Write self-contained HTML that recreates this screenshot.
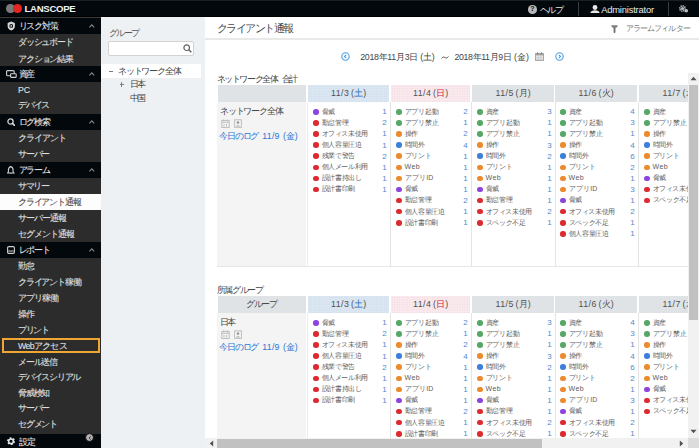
<!DOCTYPE html><html><head><meta charset="utf-8"><style>*{margin:0;padding:0;box-sizing:border-box}
html,body{width:699px;height:448px;overflow:hidden;background:#fff}
body{position:relative;font-family:"Liberation Sans",sans-serif;color:#444}
.abs{position:absolute}
.t{position:absolute;white-space:nowrap}
.sb{-webkit-text-stroke:0.08px currentColor}
.chev{position:absolute;width:3.6px;height:3.6px;border-left:1px solid #8c8c8c;border-top:1px solid #8c8c8c;transform:rotate(45deg)}
.hd{position:absolute;height:17px;background:#dfe3e6}
.hb{background-color:#dae6f2;background-image:radial-gradient(#c9d6e6 0.5px,transparent 0.6px);background-size:2.5px 2.5px}
.hp{background-color:#fae9ec;background-image:radial-gradient(#e9d3e2 0.5px,transparent 0.6px);background-size:2.5px 2.5px}
.dot{position:absolute;width:5.6px;height:5.6px;border-radius:50%}
.vl{position:absolute;width:1px;background:#e4e4e4}
</style></head><body>
<div class="abs" style="left:0;top:0;width:699px;height:17px;background:#03080d"></div>
<div class="abs" style="left:0;top:0;width:699px;height:1px;background:#182024"></div>
<div class="abs" style="left:0;top:15.5px;width:699px;height:1.5px;background:#000"></div>
<div class="abs" style="left:6px;top:4px;width:8.5px;height:9px;border-radius:50%;background:#7a7a7a"></div>
<div class="abs" style="left:12.5px;top:4px;width:9px;height:9px;border-radius:50%;background:#e52520"></div>
<div class="abs" style="left:12.5px;top:4px;width:9px;height:9px;border-radius:50%;background:#8a4a2a;clip-path:circle(4.25px at -2.25px 4.5px)"></div>
<div class="t " style="left:24.5px;top:2.7px;font-size:9.6px;line-height:11px;color:#f2f2f2;letter-spacing:-0.30px;font-weight:bold">LANSCOPE</div>
<div class="abs" style="left:528px;top:5px;width:8.5px;height:8.5px;border-radius:50%;background:#b8b8b8"></div>
<div class="t" style="left:530.3px;top:4.3px;font-size:7px;line-height:9px;font-weight:bold;color:#03080d">?</div>
<div class="t " style="left:539.5px;top:4.5px;font-size:8.8px;line-height:11px;color:#e8e8e8;letter-spacing:-1.35px;">ヘルプ</div>
<div class="abs" style="left:577.5px;top:2px;width:1px;height:13.5px;background:#3a3d40"></div>
<svg class="abs" style="left:590px;top:4.5px" width="10" height="8.5" viewBox="0 0 10 8.5"><circle cx="5" cy="2.5" r="2.4" fill="#e8e8e8"/><path d="M0.3 8.5 Q0.6 5.3 5 5.3 Q9.4 5.3 9.7 8.5Z" fill="#e8e8e8"/></svg>
<div class="t " style="left:601.2px;top:4px;font-size:9.4px;line-height:11px;color:#e8e8e8;letter-spacing:-0.20px;">Administrator</div>
<div class="abs" style="left:667.5px;top:2px;width:1px;height:13.5px;background:#3a3d40"></div>
<svg class="abs" style="left:679px;top:5px" width="10" height="8" viewBox="0 0 10 8"><circle cx="3.5" cy="3.5" r="2.6" fill="none" stroke="#bdbdbd" stroke-width="1.8" stroke-dasharray="1.2 0.8"/><circle cx="3.5" cy="3.5" r="1.6" fill="#bdbdbd"/><circle cx="7.3" cy="5.8" r="1.8" fill="#bdbdbd"/></svg>
<div class="abs" style="left:0;top:17px;width:101px;height:431px;background:#2c2c2c"></div>
<div class="abs" style="left:0;top:17px;width:101px;height:1px;background:#3a3a3a"></div>
<div class="abs" style="left:0;top:18px;width:101px;height:16px;background:#03080d"></div>
<i class="chev" style="left:90.4px;top:24.6px"></i>
<div class="t sb" style="left:18.5px;top:20.5px;font-size:8.8px;line-height:11px;color:#e4e4e4;letter-spacing:-1.18px;">リスク対策</div>
<div class="t sb" style="left:18px;top:36.5px;font-size:8.8px;line-height:11px;color:#e2e2e2;letter-spacing:-1.20px;">ダッシュボード</div>
<div class="t sb" style="left:18px;top:53.5px;font-size:8.8px;line-height:11px;color:#e2e2e2;letter-spacing:-1.13px;">アクション結果</div>
<div class="abs" style="left:0;top:66px;width:101px;height:16px;background:#03080d"></div>
<i class="chev" style="left:90.4px;top:72.6px"></i>
<div class="t sb" style="left:18.5px;top:69.0px;font-size:8.8px;line-height:11px;color:#e4e4e4;letter-spacing:-1.90px;">資産</div>
<div class="t sb" style="left:18px;top:84.5px;font-size:8.8px;line-height:11px;color:#e2e2e2;letter-spacing:0.00px;">PC</div>
<div class="t sb" style="left:18px;top:100.0px;font-size:8.8px;line-height:11px;color:#e2e2e2;letter-spacing:-1.17px;">デバイス</div>
<div class="abs" style="left:0;top:114px;width:101px;height:16px;background:#03080d"></div>
<i class="chev" style="left:90.4px;top:120.6px"></i>
<div class="t sb" style="left:18.5px;top:116.5px;font-size:8.8px;line-height:11px;color:#e4e4e4;letter-spacing:-1.07px;">ログ検索</div>
<div class="t sb" style="left:18px;top:132.5px;font-size:8.8px;line-height:11px;color:#e2e2e2;letter-spacing:-1.10px;">クライアント</div>
<div class="t sb" style="left:18px;top:148.5px;font-size:8.8px;line-height:11px;color:#e2e2e2;letter-spacing:-1.20px;">サーバー</div>
<div class="abs" style="left:0;top:162px;width:101px;height:16px;background:#03080d"></div>
<i class="chev" style="left:90.4px;top:168.6px"></i>
<div class="t sb" style="left:18.5px;top:164.5px;font-size:8.8px;line-height:11px;color:#e4e4e4;letter-spacing:-1.20px;">アラーム</div>
<div class="t sb" style="left:18px;top:180.5px;font-size:8.8px;line-height:11px;color:#e2e2e2;letter-spacing:-1.47px;">サマリー</div>
<div class="abs" style="left:0;top:194px;width:101px;height:15.5px;background:#fdfdfd"></div>
<div class="t sb" style="left:18px;top:196.5px;font-size:8.8px;line-height:11px;color:#4a4a4a;letter-spacing:-1.17px;">クライアント通報</div>
<div class="t sb" style="left:18px;top:212.5px;font-size:8.8px;line-height:11px;color:#e2e2e2;letter-spacing:-1.10px;">サーバー通報</div>
<div class="t sb" style="left:18px;top:228.5px;font-size:8.8px;line-height:11px;color:#e2e2e2;letter-spacing:-1.07px;">セグメント通報</div>
<div class="abs" style="left:0;top:242px;width:101px;height:16px;background:#03080d"></div>
<i class="chev" style="left:90.4px;top:248.6px"></i>
<div class="t sb" style="left:18.5px;top:244.5px;font-size:8.8px;line-height:11px;color:#e4e4e4;letter-spacing:-1.30px;">レポート</div>
<div class="t sb" style="left:18px;top:260.5px;font-size:8.8px;line-height:11px;color:#e2e2e2;letter-spacing:-1.40px;">勤怠</div>
<div class="t sb" style="left:18px;top:276.5px;font-size:8.8px;line-height:11px;color:#e2e2e2;letter-spacing:-1.21px;">クライアント稼働</div>
<div class="t sb" style="left:18px;top:292.5px;font-size:8.8px;line-height:11px;color:#e2e2e2;letter-spacing:-1.12px;">アプリ稼働</div>
<div class="t sb" style="left:18px;top:308.5px;font-size:8.8px;line-height:11px;color:#e2e2e2;letter-spacing:-1.40px;">操作</div>
<div class="t sb" style="left:18px;top:324.5px;font-size:8.8px;line-height:11px;color:#e2e2e2;letter-spacing:-1.27px;">プリント</div>
<div class="t sb" style="left:18px;top:340.5px;font-size:8.8px;line-height:11px;color:#e2e2e2;letter-spacing:-0.69px;">Webアクセス</div>
<div class="abs" style="left:2px;top:337.5px;width:98px;height:15px;border:2px solid #f0a632"></div>
<div class="t sb" style="left:18px;top:356.5px;font-size:8.8px;line-height:11px;color:#e2e2e2;letter-spacing:-1.18px;">メール送信</div>
<div class="t sb" style="left:18px;top:371.5px;font-size:8.8px;line-height:11px;color:#e2e2e2;letter-spacing:-1.24px;">デバイスシリアル</div>
<div class="t sb" style="left:18px;top:387.7px;font-size:8.8px;line-height:11px;color:#e2e2e2;letter-spacing:-1.23px;">脅威検知</div>
<div class="t sb" style="left:18px;top:403.0px;font-size:8.8px;line-height:11px;color:#e2e2e2;letter-spacing:-1.23px;">サーバー</div>
<div class="t sb" style="left:18px;top:419.0px;font-size:8.8px;line-height:11px;color:#e2e2e2;letter-spacing:-1.18px;">セグメント</div>
<div class="abs" style="left:0;top:434px;width:101px;height:14px;background:#03080d"></div>
<div class="t sb" style="left:18.5px;top:436.5px;font-size:8.8px;line-height:11px;color:#e4e4e4;letter-spacing:-0.70px;">設定</div>
<svg class="abs" style="left:6.5px;top:21px" width="8.5" height="10" viewBox="0 0 8.5 10"><path d="M4.25 0.5 L7.9 1.9 V5 Q7.9 8 4.25 9.6 Q0.6 8 0.6 5 V1.9Z" fill="#d5d5d5"/><circle cx="4.25" cy="4.9" r="1.9" fill="#03080d"/><circle cx="4.25" cy="4.9" r="0.9" fill="#d5d5d5"/></svg>
<svg class="abs" style="left:5.5px;top:69.8px" width="11" height="8" viewBox="0 0 11 8"><rect x="0.6" y="0.6" width="7.6" height="5.2" rx="1" fill="none" stroke="#d0d0d0" stroke-width="1.1"/><rect x="4.6" y="3.8" width="5.6" height="3.6" rx="0.6" fill="#03080d" stroke="#d0d0d0" stroke-width="1.1"/></svg>
<svg class="abs" style="left:6.5px;top:117.8px" width="8.5" height="8.5" viewBox="0 0 8.5 8.5"><circle cx="3.5" cy="3.5" r="2.6" fill="none" stroke="#d5d5d5" stroke-width="1.3"/><path d="M5.4 5.4 L8 8" stroke="#d5d5d5" stroke-width="1.6"/></svg>
<svg class="abs" style="left:7px;top:165.5px" width="7.5" height="8.5" viewBox="0 0 7.5 8.5"><path d="M3.75 0.6 Q6.1 1.3 6.1 4.2 V6 L7 7 H0.5 L1.4 6 V4.2 Q1.4 1.3 3.75 0.6Z" fill="none" stroke="#d0d0d0" stroke-width="1.1"/><path d="M2.9 8 H4.6" stroke="#d0d0d0" stroke-width="1"/></svg>
<svg class="abs" style="left:6.8px;top:245.8px" width="8" height="8" viewBox="0 0 8 8"><rect x="0.6" y="0.6" width="6.8" height="6.8" rx="1.2" fill="none" stroke="#cfcfcf" stroke-width="1.1"/><path d="M1.2 5 H6.8" stroke="#cfcfcf" stroke-width="1"/></svg>
<svg class="abs" style="left:6.8px;top:436.8px" width="8" height="8.5" viewBox="0 0 8 8.5"><circle cx="4" cy="4.25" r="3.2" fill="none" stroke="#e6e6e6" stroke-width="1.6" stroke-dasharray="1.75 1.6"/><circle cx="4" cy="4.25" r="2.35" fill="none" stroke="#e6e6e6" stroke-width="1.5"/></svg>
<div class="abs" style="left:85px;top:433.2px;width:9px;height:9px;border-radius:50%;background:#b0b0b0;border:1px solid #050608"></div>
<svg class="abs" style="left:88px;top:436px" width="4" height="4" viewBox="0 0 4 4"><path d="M2.8 0.5 L1 2 L2.8 3.5" fill="none" stroke="#333" stroke-width="0.9"/></svg>
<div class="abs" style="left:101px;top:17px;width:104px;height:431px;background:#eef1f3"></div>
<div class="t " style="left:108.8px;top:28px;font-size:8.8px;line-height:11px;color:#555;letter-spacing:-1.47px;">グループ</div>
<div class="abs" style="left:108px;top:41px;width:86px;height:15px;background:#fff;border:1px solid #d2d2d2;border-radius:2px"></div>
<svg class="abs" style="left:183px;top:44px" width="9" height="9" viewBox="0 0 9 9"><circle cx="3.7" cy="3.7" r="2.8" fill="none" stroke="#606060" stroke-width="1.2"/><path d="M5.7 5.7 L8.3 8.3" stroke="#606060" stroke-width="1.4"/></svg>
<div class="abs" style="left:101px;top:64px;width:100px;height:14px;background:#fff"></div>
<div class="abs" style="left:108.5px;top:70.5px;width:4.5px;height:1px;background:#777"></div>
<div class="t " style="left:118px;top:65.5px;font-size:8.8px;line-height:11px;color:#444;letter-spacing:-1.17px;">ネットワーク全体</div>
<div class="abs" style="left:119.5px;top:84px;width:4.5px;height:1px;background:#808080"></div><div class="abs" style="left:121.25px;top:82.25px;width:1px;height:4.5px;background:#808080"></div>
<div class="t " style="left:129.6px;top:79px;font-size:8.8px;line-height:11px;color:#444;letter-spacing:-1.70px;">日本</div>
<div class="t " style="left:129.6px;top:93px;font-size:8.8px;line-height:11px;color:#444;letter-spacing:-1.70px;">中国</div>
<div class="t " style="left:217px;top:21.5px;font-size:10.8px;line-height:13px;color:#4a4a4a;letter-spacing:-1.51px;">クライアント通報</div>
<svg class="abs" style="left:611px;top:24.8px" width="7" height="8" viewBox="0 0 7 8"><path d="M0.6 0.8 H6.4 L4 3.6 V7.6 H3 V3.6Z" fill="#8a8a8a" stroke="#666" stroke-width="0.8" stroke-linejoin="round"/></svg>
<div class="t " style="left:625.5px;top:23px;font-size:8px;line-height:11px;color:#777;letter-spacing:-0.84px;">アラームフィルター</div>
<div class="abs" style="left:205px;top:38px;width:494px;height:2px;background:#e9e9e9"></div>
<svg class="abs" style="left:341px;top:52px" width="9" height="9" viewBox="0 0 9 9"><circle cx="4.5" cy="4.5" r="3.7" fill="none" stroke="#4a9ee0" stroke-width="1.1"/><path d="M5.2 2.8 L3.5 4.5 L5.2 6.2" fill="none" stroke="#4a9ee0" stroke-width="1.1"/></svg>
<div class="t " style="left:360.2px;top:51.5px;font-size:8.8px;line-height:11px;color:#444;letter-spacing:-0.28px;">2018年11月3日</div>
<div class="t " style="left:420.3px;top:51.5px;font-size:8.8px;line-height:11px;color:#444;letter-spacing:-0.23px;">(土)</div>
<svg class="abs" style="left:440.8px;top:54.5px" width="8" height="5" viewBox="0 0 8 5"><path d="M0.5 3.6 Q2.2 0.6 4 2.5 Q5.8 4.4 7.5 1.4" fill="none" stroke="#555" stroke-width="0.9"/></svg>
<div class="t " style="left:454.5px;top:51.5px;font-size:8.8px;line-height:11px;color:#444;letter-spacing:-0.37px;">2018年11月9日</div>
<div class="t " style="left:513.9px;top:51.5px;font-size:8.8px;line-height:11px;color:#444;letter-spacing:0.12px;">(金)</div>
<svg class="abs" style="left:535.3px;top:52px" width="9" height="9" viewBox="0 0 9 9"><rect x="0.6" y="1.6" width="7.8" height="6.8" fill="#f0f0f0" stroke="#a0a0a0" stroke-width="1"/><rect x="0.6" y="1.6" width="7.8" height="1.8" fill="#a0a0a0"/><path d="M1.2 5.3 H7.8 M1.2 7 H7.8 M3.3 3.4 V8 M5.6 3.4 V8" stroke="#c4c4c4" stroke-width="0.7"/><path d="M2.5 0.2 V2.4 M6.5 0.2 V2.4" stroke="#888" stroke-width="1.1"/></svg>
<svg class="abs" style="left:555px;top:51.8px" width="9" height="9" viewBox="0 0 9 9"><circle cx="4.5" cy="4.5" r="3.7" fill="none" stroke="#4a9ee0" stroke-width="1.1"/><path d="M3.8 2.8 L5.5 4.5 L3.8 6.2" fill="none" stroke="#4a9ee0" stroke-width="1.1"/></svg>
<div class="abs" style="left:205px;top:73px;width:483px;height:365px;overflow:hidden">
<div class="t " style="left:11.5px;top:0.5px;font-size:8.8px;line-height:11px;color:#444;letter-spacing:-1.39px;">ネットワーク全体</div>
<div class="t " style="left:76.60000000000002px;top:0.5px;font-size:8.8px;line-height:11px;color:#444;letter-spacing:-1.80px;">合計</div>
<div class="hd" style="left:13px;top:12px;width:88px"></div>
<div class="abs" style="left:12px;top:29px;width:89px;height:164px;background:#f4f4f4"></div>
<div class="vl" style="left:102px;top:29px;height:164px;background:#ececec"></div>
<div class="t " style="left:15px;top:32.5px;font-size:8.8px;line-height:11px;color:#444;letter-spacing:-1.17px;">ネットワーク全体</div>
<svg class="abs" style="left:15.5px;top:45.5px" width="9" height="9" viewBox="0 0 9 9"><rect x="0.8" y="1.5" width="7.4" height="7" fill="none" stroke="#bfbfbf" stroke-width="1"/><path d="M0.8 3.3 H8.2 M2.6 0.3 V2.3 M6.4 0.3 V2.3 M3 5 V7.5 M5.5 5 V7.5" stroke="#bfbfbf" stroke-width="1"/></svg>
<svg class="abs" style="left:29px;top:45.5px" width="8" height="9" viewBox="0 0 8 9"><rect x="0.6" y="0.8" width="6.8" height="7.6" fill="none" stroke="#bfbfbf" stroke-width="1"/><circle cx="4" cy="3.6" r="1.3" fill="#999"/><path d="M1.8 7.6 Q4 4.5 6.2 7.6" fill="#b5b5b5"/></svg>
<div class="t " style="left:14.400000000000006px;top:58px;font-size:8.8px;line-height:11px;color:#2b74d2;letter-spacing:-1.23px;">今日のログ</div>
<div class="t " style="left:57.30000000000001px;top:58px;font-size:8.8px;line-height:11px;color:#2b74d2;letter-spacing:0.24px;">11/9</div>
<div class="t " style="left:78px;top:58px;font-size:8.8px;line-height:11px;color:#2b74d2;letter-spacing:-0.03px;">(金)</div>
<div class="hd hb" style="left:103px;top:12px;width:81px"></div>
<div class="t " style="left:126.0px;top:14px;font-size:8.8px;line-height:13px;color:#505050;letter-spacing:0.44px;">11/3</div>
<div class="t " style="left:146.0px;top:14px;font-size:8.8px;line-height:13px;color:#505050;letter-spacing:0.21px;">(<span style="color:#2a6cc0">土</span>)</div>
<div class="vl" style="left:185px;top:29px;height:164px"></div>
<div class="dot" style="left:108.2px;top:36.0px;background:#8d44df"></div>
<div class="t " style="left:116.6px;top:34.6px;font-size:7px;line-height:8px;color:#5c5c5c;letter-spacing:-0.20px;">脅威</div>
<div class="t" style="left:159.8px;top:34.2px;width:22px;text-align:right;font-size:8px;line-height:9px;color:#5089d2">1</div>
<div class="dot" style="left:108.2px;top:47.1px;background:#dd2a30"></div>
<div class="t " style="left:116.6px;top:45.7px;font-size:7px;line-height:8px;color:#5c5c5c;letter-spacing:-0.23px;">勤怠管理</div>
<div class="t" style="left:159.8px;top:45.3px;width:22px;text-align:right;font-size:8px;line-height:9px;color:#5089d2">2</div>
<div class="dot" style="left:108.2px;top:58.2px;background:#dd2a30"></div>
<div class="t " style="left:116.6px;top:56.8px;font-size:7px;line-height:8px;color:#5c5c5c;letter-spacing:-0.37px;">オフィス未使用</div>
<div class="t" style="left:159.8px;top:56.4px;width:22px;text-align:right;font-size:8px;line-height:9px;color:#5089d2">1</div>
<div class="dot" style="left:108.2px;top:69.3px;background:#dd2a30"></div>
<div class="t " style="left:116.6px;top:67.9px;font-size:7px;line-height:8px;color:#5c5c5c;letter-spacing:-0.34px;">個人容量圧迫</div>
<div class="t" style="left:159.8px;top:67.5px;width:22px;text-align:right;font-size:8px;line-height:9px;color:#5089d2">1</div>
<div class="dot" style="left:108.2px;top:80.4px;background:#dd2a30"></div>
<div class="t " style="left:116.6px;top:79.0px;font-size:7px;line-height:8px;color:#5c5c5c;letter-spacing:-0.30px;">残業で警告</div>
<div class="t" style="left:159.8px;top:78.6px;width:22px;text-align:right;font-size:8px;line-height:9px;color:#5089d2">2</div>
<div class="dot" style="left:108.2px;top:91.5px;background:#dd2a30"></div>
<div class="t " style="left:116.6px;top:90.1px;font-size:7px;line-height:8px;color:#5c5c5c;letter-spacing:-0.37px;">個人メール利用</div>
<div class="t" style="left:159.8px;top:89.7px;width:22px;text-align:right;font-size:8px;line-height:9px;color:#5089d2">1</div>
<div class="dot" style="left:108.2px;top:102.6px;background:#dd2a30"></div>
<div class="t " style="left:116.6px;top:101.2px;font-size:7px;line-height:8px;color:#5c5c5c;letter-spacing:-0.34px;">設計書持出し</div>
<div class="t" style="left:159.8px;top:100.8px;width:22px;text-align:right;font-size:8px;line-height:9px;color:#5089d2">1</div>
<div class="dot" style="left:108.2px;top:113.7px;background:#dd2a30"></div>
<div class="t " style="left:116.6px;top:112.3px;font-size:7px;line-height:8px;color:#5c5c5c;letter-spacing:-0.30px;">設計書印刷</div>
<div class="t" style="left:159.8px;top:111.9px;width:22px;text-align:right;font-size:8px;line-height:9px;color:#5089d2">1</div>
<div class="hd hp" style="left:186px;top:12px;width:79px"></div>
<div class="t " style="left:208.0px;top:14px;font-size:8.8px;line-height:13px;color:#505050;letter-spacing:0.44px;">11/4</div>
<div class="t " style="left:228.0px;top:14px;font-size:8.8px;line-height:13px;color:#505050;letter-spacing:0.21px;">(<span style="color:#d0283a">日</span>)</div>
<div class="vl" style="left:266px;top:29px;height:164px"></div>
<div class="dot" style="left:191.2px;top:36.0px;background:#56a866"></div>
<div class="t " style="left:199.6px;top:34.6px;font-size:7px;line-height:8px;color:#5c5c5c;letter-spacing:-0.10px;">アプリ起動</div>
<div class="t" style="left:240.8px;top:34.2px;width:22px;text-align:right;font-size:8px;line-height:9px;color:#5089d2">2</div>
<div class="dot" style="left:191.2px;top:47.1px;background:#56a866"></div>
<div class="t " style="left:199.6px;top:45.7px;font-size:7px;line-height:8px;color:#5c5c5c;letter-spacing:-0.10px;">アプリ禁止</div>
<div class="t" style="left:240.8px;top:45.3px;width:22px;text-align:right;font-size:8px;line-height:9px;color:#5089d2">1</div>
<div class="dot" style="left:191.2px;top:58.2px;background:#ec8a2e"></div>
<div class="t " style="left:199.6px;top:56.8px;font-size:7px;line-height:8px;color:#5c5c5c;letter-spacing:-0.20px;">操作</div>
<div class="t" style="left:240.8px;top:56.4px;width:22px;text-align:right;font-size:8px;line-height:9px;color:#5089d2">2</div>
<div class="dot" style="left:191.2px;top:69.3px;background:#3d7fdc"></div>
<div class="t " style="left:199.6px;top:67.9px;font-size:7px;line-height:8px;color:#5c5c5c;letter-spacing:-0.30px;">時間外</div>
<div class="t" style="left:240.8px;top:67.5px;width:22px;text-align:right;font-size:8px;line-height:9px;color:#5089d2">4</div>
<div class="dot" style="left:191.2px;top:80.4px;background:#ec8a2e"></div>
<div class="t " style="left:199.6px;top:79.0px;font-size:7px;line-height:8px;color:#5c5c5c;letter-spacing:-0.17px;">プリント</div>
<div class="t" style="left:240.8px;top:78.6px;width:22px;text-align:right;font-size:8px;line-height:9px;color:#5089d2">1</div>
<div class="dot" style="left:191.2px;top:91.5px;background:#ec8a2e"></div>
<div class="t " style="left:199.6px;top:90.1px;font-size:7px;line-height:8px;color:#5c5c5c;letter-spacing:0.41px;">Web</div>
<div class="t" style="left:240.8px;top:89.7px;width:22px;text-align:right;font-size:8px;line-height:9px;color:#5089d2">1</div>
<div class="dot" style="left:191.2px;top:102.6px;background:#ec8a2e"></div>
<div class="t " style="left:199.6px;top:101.2px;font-size:7px;line-height:8px;color:#5c5c5c;letter-spacing:0.20px;">アプリID</div>
<div class="t" style="left:240.8px;top:100.8px;width:22px;text-align:right;font-size:8px;line-height:9px;color:#5089d2">1</div>
<div class="dot" style="left:191.2px;top:113.7px;background:#8d44df"></div>
<div class="t " style="left:199.6px;top:112.3px;font-size:7px;line-height:8px;color:#5c5c5c;letter-spacing:-0.20px;">脅威</div>
<div class="t" style="left:240.8px;top:111.9px;width:22px;text-align:right;font-size:8px;line-height:9px;color:#5089d2">1</div>
<div class="dot" style="left:191.2px;top:124.8px;background:#dd2a30"></div>
<div class="t " style="left:199.6px;top:123.4px;font-size:7px;line-height:8px;color:#5c5c5c;letter-spacing:-0.23px;">勤怠管理</div>
<div class="t" style="left:240.8px;top:123.0px;width:22px;text-align:right;font-size:8px;line-height:9px;color:#5089d2">2</div>
<div class="dot" style="left:191.2px;top:135.9px;background:#dd2a30"></div>
<div class="t " style="left:199.6px;top:134.5px;font-size:7px;line-height:8px;color:#5c5c5c;letter-spacing:-0.34px;">個人容量圧迫</div>
<div class="t" style="left:240.8px;top:134.1px;width:22px;text-align:right;font-size:8px;line-height:9px;color:#5089d2">1</div>
<div class="dot" style="left:191.2px;top:147.0px;background:#dd2a30"></div>
<div class="t " style="left:199.6px;top:145.6px;font-size:7px;line-height:8px;color:#5c5c5c;letter-spacing:-0.30px;">設計書印刷</div>
<div class="t" style="left:240.8px;top:145.2px;width:22px;text-align:right;font-size:8px;line-height:9px;color:#5089d2">1</div>
<div class="hd " style="left:267px;top:12px;width:82px"></div>
<div class="t " style="left:290.5px;top:14px;font-size:8.8px;line-height:13px;color:#505050;letter-spacing:0.44px;">11/5</div>
<div class="t " style="left:310.5px;top:14px;font-size:8.8px;line-height:13px;color:#505050;letter-spacing:0.22px;">(月)</div>
<div class="vl" style="left:350px;top:29px;height:164px"></div>
<div class="dot" style="left:272.2px;top:36.0px;background:#56a866"></div>
<div class="t " style="left:280.6px;top:34.6px;font-size:7px;line-height:8px;color:#5c5c5c;letter-spacing:-0.20px;">資産</div>
<div class="t" style="left:324.8px;top:34.2px;width:22px;text-align:right;font-size:8px;line-height:9px;color:#5089d2">3</div>
<div class="dot" style="left:272.2px;top:47.1px;background:#56a866"></div>
<div class="t " style="left:280.6px;top:45.7px;font-size:7px;line-height:8px;color:#5c5c5c;letter-spacing:-0.10px;">アプリ起動</div>
<div class="t" style="left:324.8px;top:45.3px;width:22px;text-align:right;font-size:8px;line-height:9px;color:#5089d2">1</div>
<div class="dot" style="left:272.2px;top:58.2px;background:#56a866"></div>
<div class="t " style="left:280.6px;top:56.8px;font-size:7px;line-height:8px;color:#5c5c5c;letter-spacing:-0.10px;">アプリ禁止</div>
<div class="t" style="left:324.8px;top:56.4px;width:22px;text-align:right;font-size:8px;line-height:9px;color:#5089d2">1</div>
<div class="dot" style="left:272.2px;top:69.3px;background:#ec8a2e"></div>
<div class="t " style="left:280.6px;top:67.9px;font-size:7px;line-height:8px;color:#5c5c5c;letter-spacing:-0.20px;">操作</div>
<div class="t" style="left:324.8px;top:67.5px;width:22px;text-align:right;font-size:8px;line-height:9px;color:#5089d2">3</div>
<div class="dot" style="left:272.2px;top:80.4px;background:#3d7fdc"></div>
<div class="t " style="left:280.6px;top:79.0px;font-size:7px;line-height:8px;color:#5c5c5c;letter-spacing:-0.30px;">時間外</div>
<div class="t" style="left:324.8px;top:78.6px;width:22px;text-align:right;font-size:8px;line-height:9px;color:#5089d2">2</div>
<div class="dot" style="left:272.2px;top:91.5px;background:#ec8a2e"></div>
<div class="t " style="left:280.6px;top:90.1px;font-size:7px;line-height:8px;color:#5c5c5c;letter-spacing:-0.17px;">プリント</div>
<div class="t" style="left:324.8px;top:89.7px;width:22px;text-align:right;font-size:8px;line-height:9px;color:#5089d2">1</div>
<div class="dot" style="left:272.2px;top:102.6px;background:#ec8a2e"></div>
<div class="t " style="left:280.6px;top:101.2px;font-size:7px;line-height:8px;color:#5c5c5c;letter-spacing:0.41px;">Web</div>
<div class="t" style="left:324.8px;top:100.8px;width:22px;text-align:right;font-size:8px;line-height:9px;color:#5089d2">1</div>
<div class="dot" style="left:272.2px;top:113.7px;background:#8d44df"></div>
<div class="t " style="left:280.6px;top:112.3px;font-size:7px;line-height:8px;color:#5c5c5c;letter-spacing:-0.20px;">脅威</div>
<div class="t" style="left:324.8px;top:111.9px;width:22px;text-align:right;font-size:8px;line-height:9px;color:#5089d2">1</div>
<div class="dot" style="left:272.2px;top:124.8px;background:#dd2a30"></div>
<div class="t " style="left:280.6px;top:123.4px;font-size:7px;line-height:8px;color:#5c5c5c;letter-spacing:-0.23px;">勤怠管理</div>
<div class="t" style="left:324.8px;top:123.0px;width:22px;text-align:right;font-size:8px;line-height:9px;color:#5089d2">1</div>
<div class="dot" style="left:272.2px;top:135.9px;background:#dd2a30"></div>
<div class="t " style="left:280.6px;top:134.5px;font-size:7px;line-height:8px;color:#5c5c5c;letter-spacing:-0.37px;">オフィス未使用</div>
<div class="t" style="left:324.8px;top:134.1px;width:22px;text-align:right;font-size:8px;line-height:9px;color:#5089d2">2</div>
<div class="dot" style="left:272.2px;top:147.0px;background:#dd2a30"></div>
<div class="t " style="left:280.6px;top:145.6px;font-size:7px;line-height:8px;color:#5c5c5c;letter-spacing:-0.34px;">スペック不足</div>
<div class="t" style="left:324.8px;top:145.2px;width:22px;text-align:right;font-size:8px;line-height:9px;color:#5089d2">1</div>
<div class="hd " style="left:350px;top:12px;width:82px"></div>
<div class="t " style="left:373.5px;top:14px;font-size:8.8px;line-height:13px;color:#505050;letter-spacing:0.44px;">11/6</div>
<div class="t " style="left:393.5px;top:14px;font-size:8.8px;line-height:13px;color:#505050;letter-spacing:0.22px;">(火)</div>
<div class="vl" style="left:433px;top:29px;height:164px"></div>
<div class="dot" style="left:355.2px;top:36.0px;background:#56a866"></div>
<div class="t " style="left:363.6px;top:34.6px;font-size:7px;line-height:8px;color:#5c5c5c;letter-spacing:-0.20px;">資産</div>
<div class="t" style="left:407.8px;top:34.2px;width:22px;text-align:right;font-size:8px;line-height:9px;color:#5089d2">4</div>
<div class="dot" style="left:355.2px;top:47.1px;background:#56a866"></div>
<div class="t " style="left:363.6px;top:45.7px;font-size:7px;line-height:8px;color:#5c5c5c;letter-spacing:-0.10px;">アプリ起動</div>
<div class="t" style="left:407.8px;top:45.3px;width:22px;text-align:right;font-size:8px;line-height:9px;color:#5089d2">3</div>
<div class="dot" style="left:355.2px;top:58.2px;background:#56a866"></div>
<div class="t " style="left:363.6px;top:56.8px;font-size:7px;line-height:8px;color:#5c5c5c;letter-spacing:-0.10px;">アプリ禁止</div>
<div class="t" style="left:407.8px;top:56.4px;width:22px;text-align:right;font-size:8px;line-height:9px;color:#5089d2">1</div>
<div class="dot" style="left:355.2px;top:69.3px;background:#ec8a2e"></div>
<div class="t " style="left:363.6px;top:67.9px;font-size:7px;line-height:8px;color:#5c5c5c;letter-spacing:-0.20px;">操作</div>
<div class="t" style="left:407.8px;top:67.5px;width:22px;text-align:right;font-size:8px;line-height:9px;color:#5089d2">4</div>
<div class="dot" style="left:355.2px;top:80.4px;background:#3d7fdc"></div>
<div class="t " style="left:363.6px;top:79.0px;font-size:7px;line-height:8px;color:#5c5c5c;letter-spacing:-0.30px;">時間外</div>
<div class="t" style="left:407.8px;top:78.6px;width:22px;text-align:right;font-size:8px;line-height:9px;color:#5089d2">6</div>
<div class="dot" style="left:355.2px;top:91.5px;background:#ec8a2e"></div>
<div class="t " style="left:363.6px;top:90.1px;font-size:7px;line-height:8px;color:#5c5c5c;letter-spacing:-0.17px;">プリント</div>
<div class="t" style="left:407.8px;top:89.7px;width:22px;text-align:right;font-size:8px;line-height:9px;color:#5089d2">2</div>
<div class="dot" style="left:355.2px;top:102.6px;background:#ec8a2e"></div>
<div class="t " style="left:363.6px;top:101.2px;font-size:7px;line-height:8px;color:#5c5c5c;letter-spacing:0.41px;">Web</div>
<div class="t" style="left:407.8px;top:100.8px;width:22px;text-align:right;font-size:8px;line-height:9px;color:#5089d2">1</div>
<div class="dot" style="left:355.2px;top:113.7px;background:#ec8a2e"></div>
<div class="t " style="left:363.6px;top:112.3px;font-size:7px;line-height:8px;color:#5c5c5c;letter-spacing:0.20px;">アプリID</div>
<div class="t" style="left:407.8px;top:111.9px;width:22px;text-align:right;font-size:8px;line-height:9px;color:#5089d2">3</div>
<div class="dot" style="left:355.2px;top:124.8px;background:#8d44df"></div>
<div class="t " style="left:363.6px;top:123.4px;font-size:7px;line-height:8px;color:#5c5c5c;letter-spacing:-0.20px;">脅威</div>
<div class="t" style="left:407.8px;top:123.0px;width:22px;text-align:right;font-size:8px;line-height:9px;color:#5089d2">1</div>
<div class="dot" style="left:355.2px;top:135.9px;background:#dd2a30"></div>
<div class="t " style="left:363.6px;top:134.5px;font-size:7px;line-height:8px;color:#5c5c5c;letter-spacing:-0.37px;">オフィス未使用</div>
<div class="t" style="left:407.8px;top:134.1px;width:22px;text-align:right;font-size:8px;line-height:9px;color:#5089d2">2</div>
<div class="dot" style="left:355.2px;top:147.0px;background:#dd2a30"></div>
<div class="t " style="left:363.6px;top:145.6px;font-size:7px;line-height:8px;color:#5c5c5c;letter-spacing:-0.34px;">スペック不足</div>
<div class="t" style="left:407.8px;top:145.2px;width:22px;text-align:right;font-size:8px;line-height:9px;color:#5089d2">1</div>
<div class="dot" style="left:355.2px;top:158.1px;background:#dd2a30"></div>
<div class="t " style="left:363.6px;top:156.7px;font-size:7px;line-height:8px;color:#5c5c5c;letter-spacing:-0.34px;">個人容量圧迫</div>
<div class="t" style="left:407.8px;top:156.3px;width:22px;text-align:right;font-size:8px;line-height:9px;color:#5089d2">1</div>
<div class="hd " style="left:434px;top:12px;width:82px"></div>
<div class="t " style="left:457.5px;top:14px;font-size:8.8px;line-height:13px;color:#505050;letter-spacing:0.44px;">11/7</div>
<div class="t " style="left:477.5px;top:14px;font-size:8.8px;line-height:13px;color:#505050;letter-spacing:0.22px;">(水)</div>
<div class="vl" style="left:517px;top:29px;height:164px"></div>
<div class="dot" style="left:439.2px;top:36.0px;background:#56a866"></div>
<div class="t " style="left:447.6px;top:34.6px;font-size:7px;line-height:8px;color:#5c5c5c;letter-spacing:-0.20px;">資産</div>
<div class="t" style="left:491.8px;top:34.2px;width:22px;text-align:right;font-size:8px;line-height:9px;color:#5089d2">4</div>
<div class="dot" style="left:439.2px;top:47.1px;background:#56a866"></div>
<div class="t " style="left:447.6px;top:45.7px;font-size:7px;line-height:8px;color:#5c5c5c;letter-spacing:-0.10px;">アプリ禁止</div>
<div class="t" style="left:491.8px;top:45.3px;width:22px;text-align:right;font-size:8px;line-height:9px;color:#5089d2">3</div>
<div class="dot" style="left:439.2px;top:58.2px;background:#ec8a2e"></div>
<div class="t " style="left:447.6px;top:56.8px;font-size:7px;line-height:8px;color:#5c5c5c;letter-spacing:-0.20px;">操作</div>
<div class="t" style="left:491.8px;top:56.4px;width:22px;text-align:right;font-size:8px;line-height:9px;color:#5089d2">1</div>
<div class="dot" style="left:439.2px;top:69.3px;background:#3d7fdc"></div>
<div class="t " style="left:447.6px;top:67.9px;font-size:7px;line-height:8px;color:#5c5c5c;letter-spacing:-0.30px;">時間外</div>
<div class="t" style="left:491.8px;top:67.5px;width:22px;text-align:right;font-size:8px;line-height:9px;color:#5089d2">4</div>
<div class="dot" style="left:439.2px;top:80.4px;background:#ec8a2e"></div>
<div class="t " style="left:447.6px;top:79.0px;font-size:7px;line-height:8px;color:#5c5c5c;letter-spacing:-0.17px;">プリント</div>
<div class="t" style="left:491.8px;top:78.6px;width:22px;text-align:right;font-size:8px;line-height:9px;color:#5089d2">6</div>
<div class="dot" style="left:439.2px;top:91.5px;background:#ec8a2e"></div>
<div class="t " style="left:447.6px;top:90.1px;font-size:7px;line-height:8px;color:#5c5c5c;letter-spacing:0.41px;">Web</div>
<div class="t" style="left:491.8px;top:89.7px;width:22px;text-align:right;font-size:8px;line-height:9px;color:#5089d2">2</div>
<div class="dot" style="left:439.2px;top:102.6px;background:#8d44df"></div>
<div class="t " style="left:447.6px;top:101.2px;font-size:7px;line-height:8px;color:#5c5c5c;letter-spacing:-0.20px;">脅威</div>
<div class="t" style="left:491.8px;top:100.8px;width:22px;text-align:right;font-size:8px;line-height:9px;color:#5089d2">1</div>
<div class="dot" style="left:439.2px;top:113.7px;background:#dd2a30"></div>
<div class="t " style="left:447.6px;top:112.3px;font-size:7px;line-height:8px;color:#5c5c5c;letter-spacing:-0.37px;">オフィス未使用</div>
<div class="t" style="left:491.8px;top:111.9px;width:22px;text-align:right;font-size:8px;line-height:9px;color:#5089d2">3</div>
<div class="dot" style="left:439.2px;top:124.8px;background:#dd2a30"></div>
<div class="t " style="left:447.6px;top:123.4px;font-size:7px;line-height:8px;color:#5c5c5c;letter-spacing:-0.34px;">スペック不足</div>
<div class="t" style="left:491.8px;top:123.0px;width:22px;text-align:right;font-size:8px;line-height:9px;color:#5089d2">1</div>
<div class="abs" style="left:12px;top:193px;width:480px;height:1px;background:#e6e6e6"></div>
<div class="t " style="left:11.5px;top:211.5px;font-size:8.8px;line-height:11px;color:#444;letter-spacing:-1.26px;">所属グループ</div>
<div class="hd" style="left:13px;top:223px;width:88px"></div>
<div class="t " style="left:41.30000000000001px;top:225px;font-size:8.8px;line-height:13px;color:#444;letter-spacing:-1.53px;">グループ</div>
<div class="abs" style="left:12px;top:240px;width:89px;height:207px;background:#f4f4f4"></div>
<div class="vl" style="left:102px;top:240px;height:207px;background:#ececec"></div>
<div class="t " style="left:15px;top:243.5px;font-size:8.8px;line-height:11px;color:#444;letter-spacing:-1.60px;">日本</div>
<svg class="abs" style="left:15.5px;top:256.5px" width="9" height="9" viewBox="0 0 9 9"><rect x="0.8" y="1.5" width="7.4" height="7" fill="none" stroke="#bfbfbf" stroke-width="1"/><path d="M0.8 3.3 H8.2 M2.6 0.3 V2.3 M6.4 0.3 V2.3 M3 5 V7.5 M5.5 5 V7.5" stroke="#bfbfbf" stroke-width="1"/></svg>
<svg class="abs" style="left:29px;top:256.5px" width="8" height="9" viewBox="0 0 8 9"><rect x="0.6" y="0.8" width="6.8" height="7.6" fill="none" stroke="#bfbfbf" stroke-width="1"/><circle cx="4" cy="3.6" r="1.3" fill="#999"/><path d="M1.8 7.6 Q4 4.5 6.2 7.6" fill="#b5b5b5"/></svg>
<div class="t " style="left:14.400000000000006px;top:269px;font-size:8.8px;line-height:11px;color:#2b74d2;letter-spacing:-1.23px;">今日のログ</div>
<div class="t " style="left:57.30000000000001px;top:269px;font-size:8.8px;line-height:11px;color:#2b74d2;letter-spacing:0.24px;">11/9</div>
<div class="t " style="left:78px;top:269px;font-size:8.8px;line-height:11px;color:#2b74d2;letter-spacing:-0.03px;">(金)</div>
<div class="hd hb" style="left:103px;top:223px;width:81px"></div>
<div class="t " style="left:126.0px;top:225px;font-size:8.8px;line-height:13px;color:#505050;letter-spacing:0.44px;">11/3</div>
<div class="t " style="left:146.0px;top:225px;font-size:8.8px;line-height:13px;color:#505050;letter-spacing:0.21px;">(<span style="color:#2a6cc0">土</span>)</div>
<div class="vl" style="left:185px;top:240px;height:207px"></div>
<div class="dot" style="left:108.2px;top:247.0px;background:#8d44df"></div>
<div class="t " style="left:116.6px;top:245.6px;font-size:7px;line-height:8px;color:#5c5c5c;letter-spacing:-0.20px;">脅威</div>
<div class="t" style="left:159.8px;top:245.2px;width:22px;text-align:right;font-size:8px;line-height:9px;color:#5089d2">1</div>
<div class="dot" style="left:108.2px;top:258.1px;background:#dd2a30"></div>
<div class="t " style="left:116.6px;top:256.7px;font-size:7px;line-height:8px;color:#5c5c5c;letter-spacing:-0.23px;">勤怠管理</div>
<div class="t" style="left:159.8px;top:256.3px;width:22px;text-align:right;font-size:8px;line-height:9px;color:#5089d2">2</div>
<div class="dot" style="left:108.2px;top:269.2px;background:#dd2a30"></div>
<div class="t " style="left:116.6px;top:267.8px;font-size:7px;line-height:8px;color:#5c5c5c;letter-spacing:-0.37px;">オフィス未使用</div>
<div class="t" style="left:159.8px;top:267.4px;width:22px;text-align:right;font-size:8px;line-height:9px;color:#5089d2">1</div>
<div class="dot" style="left:108.2px;top:280.3px;background:#dd2a30"></div>
<div class="t " style="left:116.6px;top:278.9px;font-size:7px;line-height:8px;color:#5c5c5c;letter-spacing:-0.34px;">個人容量圧迫</div>
<div class="t" style="left:159.8px;top:278.5px;width:22px;text-align:right;font-size:8px;line-height:9px;color:#5089d2">1</div>
<div class="dot" style="left:108.2px;top:291.4px;background:#dd2a30"></div>
<div class="t " style="left:116.6px;top:290.0px;font-size:7px;line-height:8px;color:#5c5c5c;letter-spacing:-0.30px;">残業で警告</div>
<div class="t" style="left:159.8px;top:289.6px;width:22px;text-align:right;font-size:8px;line-height:9px;color:#5089d2">2</div>
<div class="dot" style="left:108.2px;top:302.5px;background:#dd2a30"></div>
<div class="t " style="left:116.6px;top:301.1px;font-size:7px;line-height:8px;color:#5c5c5c;letter-spacing:-0.37px;">個人メール利用</div>
<div class="t" style="left:159.8px;top:300.7px;width:22px;text-align:right;font-size:8px;line-height:9px;color:#5089d2">1</div>
<div class="dot" style="left:108.2px;top:313.6px;background:#dd2a30"></div>
<div class="t " style="left:116.6px;top:312.2px;font-size:7px;line-height:8px;color:#5c5c5c;letter-spacing:-0.34px;">設計書持出し</div>
<div class="t" style="left:159.8px;top:311.8px;width:22px;text-align:right;font-size:8px;line-height:9px;color:#5089d2">1</div>
<div class="dot" style="left:108.2px;top:324.7px;background:#dd2a30"></div>
<div class="t " style="left:116.6px;top:323.3px;font-size:7px;line-height:8px;color:#5c5c5c;letter-spacing:-0.30px;">設計書印刷</div>
<div class="t" style="left:159.8px;top:322.9px;width:22px;text-align:right;font-size:8px;line-height:9px;color:#5089d2">1</div>
<div class="hd hp" style="left:186px;top:223px;width:79px"></div>
<div class="t " style="left:208.0px;top:225px;font-size:8.8px;line-height:13px;color:#505050;letter-spacing:0.44px;">11/4</div>
<div class="t " style="left:228.0px;top:225px;font-size:8.8px;line-height:13px;color:#505050;letter-spacing:0.21px;">(<span style="color:#d0283a">日</span>)</div>
<div class="vl" style="left:266px;top:240px;height:207px"></div>
<div class="dot" style="left:191.2px;top:247.0px;background:#56a866"></div>
<div class="t " style="left:199.6px;top:245.6px;font-size:7px;line-height:8px;color:#5c5c5c;letter-spacing:-0.10px;">アプリ起動</div>
<div class="t" style="left:240.8px;top:245.2px;width:22px;text-align:right;font-size:8px;line-height:9px;color:#5089d2">2</div>
<div class="dot" style="left:191.2px;top:258.1px;background:#56a866"></div>
<div class="t " style="left:199.6px;top:256.7px;font-size:7px;line-height:8px;color:#5c5c5c;letter-spacing:-0.10px;">アプリ禁止</div>
<div class="t" style="left:240.8px;top:256.3px;width:22px;text-align:right;font-size:8px;line-height:9px;color:#5089d2">1</div>
<div class="dot" style="left:191.2px;top:269.2px;background:#ec8a2e"></div>
<div class="t " style="left:199.6px;top:267.8px;font-size:7px;line-height:8px;color:#5c5c5c;letter-spacing:-0.20px;">操作</div>
<div class="t" style="left:240.8px;top:267.4px;width:22px;text-align:right;font-size:8px;line-height:9px;color:#5089d2">2</div>
<div class="dot" style="left:191.2px;top:280.3px;background:#3d7fdc"></div>
<div class="t " style="left:199.6px;top:278.9px;font-size:7px;line-height:8px;color:#5c5c5c;letter-spacing:-0.30px;">時間外</div>
<div class="t" style="left:240.8px;top:278.5px;width:22px;text-align:right;font-size:8px;line-height:9px;color:#5089d2">4</div>
<div class="dot" style="left:191.2px;top:291.4px;background:#ec8a2e"></div>
<div class="t " style="left:199.6px;top:290.0px;font-size:7px;line-height:8px;color:#5c5c5c;letter-spacing:-0.17px;">プリント</div>
<div class="t" style="left:240.8px;top:289.6px;width:22px;text-align:right;font-size:8px;line-height:9px;color:#5089d2">1</div>
<div class="dot" style="left:191.2px;top:302.5px;background:#ec8a2e"></div>
<div class="t " style="left:199.6px;top:301.1px;font-size:7px;line-height:8px;color:#5c5c5c;letter-spacing:0.41px;">Web</div>
<div class="t" style="left:240.8px;top:300.7px;width:22px;text-align:right;font-size:8px;line-height:9px;color:#5089d2">1</div>
<div class="dot" style="left:191.2px;top:313.6px;background:#ec8a2e"></div>
<div class="t " style="left:199.6px;top:312.2px;font-size:7px;line-height:8px;color:#5c5c5c;letter-spacing:0.20px;">アプリID</div>
<div class="t" style="left:240.8px;top:311.8px;width:22px;text-align:right;font-size:8px;line-height:9px;color:#5089d2">1</div>
<div class="dot" style="left:191.2px;top:324.7px;background:#8d44df"></div>
<div class="t " style="left:199.6px;top:323.3px;font-size:7px;line-height:8px;color:#5c5c5c;letter-spacing:-0.20px;">脅威</div>
<div class="t" style="left:240.8px;top:322.9px;width:22px;text-align:right;font-size:8px;line-height:9px;color:#5089d2">1</div>
<div class="dot" style="left:191.2px;top:335.8px;background:#dd2a30"></div>
<div class="t " style="left:199.6px;top:334.4px;font-size:7px;line-height:8px;color:#5c5c5c;letter-spacing:-0.23px;">勤怠管理</div>
<div class="t" style="left:240.8px;top:334.0px;width:22px;text-align:right;font-size:8px;line-height:9px;color:#5089d2">2</div>
<div class="dot" style="left:191.2px;top:346.9px;background:#dd2a30"></div>
<div class="t " style="left:199.6px;top:345.5px;font-size:7px;line-height:8px;color:#5c5c5c;letter-spacing:-0.34px;">個人容量圧迫</div>
<div class="t" style="left:240.8px;top:345.1px;width:22px;text-align:right;font-size:8px;line-height:9px;color:#5089d2">1</div>
<div class="dot" style="left:191.2px;top:358.0px;background:#dd2a30"></div>
<div class="t " style="left:199.6px;top:356.6px;font-size:7px;line-height:8px;color:#5c5c5c;letter-spacing:-0.30px;">設計書印刷</div>
<div class="t" style="left:240.8px;top:356.2px;width:22px;text-align:right;font-size:8px;line-height:9px;color:#5089d2">1</div>
<div class="hd " style="left:267px;top:223px;width:82px"></div>
<div class="t " style="left:290.5px;top:225px;font-size:8.8px;line-height:13px;color:#505050;letter-spacing:0.44px;">11/5</div>
<div class="t " style="left:310.5px;top:225px;font-size:8.8px;line-height:13px;color:#505050;letter-spacing:0.22px;">(月)</div>
<div class="vl" style="left:350px;top:240px;height:207px"></div>
<div class="dot" style="left:272.2px;top:247.0px;background:#56a866"></div>
<div class="t " style="left:280.6px;top:245.6px;font-size:7px;line-height:8px;color:#5c5c5c;letter-spacing:-0.20px;">資産</div>
<div class="t" style="left:324.8px;top:245.2px;width:22px;text-align:right;font-size:8px;line-height:9px;color:#5089d2">3</div>
<div class="dot" style="left:272.2px;top:258.1px;background:#56a866"></div>
<div class="t " style="left:280.6px;top:256.7px;font-size:7px;line-height:8px;color:#5c5c5c;letter-spacing:-0.10px;">アプリ起動</div>
<div class="t" style="left:324.8px;top:256.3px;width:22px;text-align:right;font-size:8px;line-height:9px;color:#5089d2">1</div>
<div class="dot" style="left:272.2px;top:269.2px;background:#56a866"></div>
<div class="t " style="left:280.6px;top:267.8px;font-size:7px;line-height:8px;color:#5c5c5c;letter-spacing:-0.10px;">アプリ禁止</div>
<div class="t" style="left:324.8px;top:267.4px;width:22px;text-align:right;font-size:8px;line-height:9px;color:#5089d2">1</div>
<div class="dot" style="left:272.2px;top:280.3px;background:#ec8a2e"></div>
<div class="t " style="left:280.6px;top:278.9px;font-size:7px;line-height:8px;color:#5c5c5c;letter-spacing:-0.20px;">操作</div>
<div class="t" style="left:324.8px;top:278.5px;width:22px;text-align:right;font-size:8px;line-height:9px;color:#5089d2">3</div>
<div class="dot" style="left:272.2px;top:291.4px;background:#3d7fdc"></div>
<div class="t " style="left:280.6px;top:290.0px;font-size:7px;line-height:8px;color:#5c5c5c;letter-spacing:-0.30px;">時間外</div>
<div class="t" style="left:324.8px;top:289.6px;width:22px;text-align:right;font-size:8px;line-height:9px;color:#5089d2">2</div>
<div class="dot" style="left:272.2px;top:302.5px;background:#ec8a2e"></div>
<div class="t " style="left:280.6px;top:301.1px;font-size:7px;line-height:8px;color:#5c5c5c;letter-spacing:-0.17px;">プリント</div>
<div class="t" style="left:324.8px;top:300.7px;width:22px;text-align:right;font-size:8px;line-height:9px;color:#5089d2">1</div>
<div class="dot" style="left:272.2px;top:313.6px;background:#ec8a2e"></div>
<div class="t " style="left:280.6px;top:312.2px;font-size:7px;line-height:8px;color:#5c5c5c;letter-spacing:0.41px;">Web</div>
<div class="t" style="left:324.8px;top:311.8px;width:22px;text-align:right;font-size:8px;line-height:9px;color:#5089d2">1</div>
<div class="dot" style="left:272.2px;top:324.7px;background:#8d44df"></div>
<div class="t " style="left:280.6px;top:323.3px;font-size:7px;line-height:8px;color:#5c5c5c;letter-spacing:-0.20px;">脅威</div>
<div class="t" style="left:324.8px;top:322.9px;width:22px;text-align:right;font-size:8px;line-height:9px;color:#5089d2">1</div>
<div class="dot" style="left:272.2px;top:335.8px;background:#dd2a30"></div>
<div class="t " style="left:280.6px;top:334.4px;font-size:7px;line-height:8px;color:#5c5c5c;letter-spacing:-0.23px;">勤怠管理</div>
<div class="t" style="left:324.8px;top:334.0px;width:22px;text-align:right;font-size:8px;line-height:9px;color:#5089d2">1</div>
<div class="dot" style="left:272.2px;top:346.9px;background:#dd2a30"></div>
<div class="t " style="left:280.6px;top:345.5px;font-size:7px;line-height:8px;color:#5c5c5c;letter-spacing:-0.37px;">オフィス未使用</div>
<div class="t" style="left:324.8px;top:345.1px;width:22px;text-align:right;font-size:8px;line-height:9px;color:#5089d2">2</div>
<div class="dot" style="left:272.2px;top:358.0px;background:#dd2a30"></div>
<div class="t " style="left:280.6px;top:356.6px;font-size:7px;line-height:8px;color:#5c5c5c;letter-spacing:-0.34px;">スペック不足</div>
<div class="t" style="left:324.8px;top:356.2px;width:22px;text-align:right;font-size:8px;line-height:9px;color:#5089d2">1</div>
<div class="hd " style="left:350px;top:223px;width:82px"></div>
<div class="t " style="left:373.5px;top:225px;font-size:8.8px;line-height:13px;color:#505050;letter-spacing:0.44px;">11/6</div>
<div class="t " style="left:393.5px;top:225px;font-size:8.8px;line-height:13px;color:#505050;letter-spacing:0.22px;">(火)</div>
<div class="vl" style="left:433px;top:240px;height:207px"></div>
<div class="dot" style="left:355.2px;top:247.0px;background:#56a866"></div>
<div class="t " style="left:363.6px;top:245.6px;font-size:7px;line-height:8px;color:#5c5c5c;letter-spacing:-0.20px;">資産</div>
<div class="t" style="left:407.8px;top:245.2px;width:22px;text-align:right;font-size:8px;line-height:9px;color:#5089d2">4</div>
<div class="dot" style="left:355.2px;top:258.1px;background:#56a866"></div>
<div class="t " style="left:363.6px;top:256.7px;font-size:7px;line-height:8px;color:#5c5c5c;letter-spacing:-0.10px;">アプリ起動</div>
<div class="t" style="left:407.8px;top:256.3px;width:22px;text-align:right;font-size:8px;line-height:9px;color:#5089d2">3</div>
<div class="dot" style="left:355.2px;top:269.2px;background:#56a866"></div>
<div class="t " style="left:363.6px;top:267.8px;font-size:7px;line-height:8px;color:#5c5c5c;letter-spacing:-0.10px;">アプリ禁止</div>
<div class="t" style="left:407.8px;top:267.4px;width:22px;text-align:right;font-size:8px;line-height:9px;color:#5089d2">1</div>
<div class="dot" style="left:355.2px;top:280.3px;background:#ec8a2e"></div>
<div class="t " style="left:363.6px;top:278.9px;font-size:7px;line-height:8px;color:#5c5c5c;letter-spacing:-0.20px;">操作</div>
<div class="t" style="left:407.8px;top:278.5px;width:22px;text-align:right;font-size:8px;line-height:9px;color:#5089d2">4</div>
<div class="dot" style="left:355.2px;top:291.4px;background:#3d7fdc"></div>
<div class="t " style="left:363.6px;top:290.0px;font-size:7px;line-height:8px;color:#5c5c5c;letter-spacing:-0.30px;">時間外</div>
<div class="t" style="left:407.8px;top:289.6px;width:22px;text-align:right;font-size:8px;line-height:9px;color:#5089d2">6</div>
<div class="dot" style="left:355.2px;top:302.5px;background:#ec8a2e"></div>
<div class="t " style="left:363.6px;top:301.1px;font-size:7px;line-height:8px;color:#5c5c5c;letter-spacing:-0.17px;">プリント</div>
<div class="t" style="left:407.8px;top:300.7px;width:22px;text-align:right;font-size:8px;line-height:9px;color:#5089d2">2</div>
<div class="dot" style="left:355.2px;top:313.6px;background:#ec8a2e"></div>
<div class="t " style="left:363.6px;top:312.2px;font-size:7px;line-height:8px;color:#5c5c5c;letter-spacing:0.41px;">Web</div>
<div class="t" style="left:407.8px;top:311.8px;width:22px;text-align:right;font-size:8px;line-height:9px;color:#5089d2">1</div>
<div class="dot" style="left:355.2px;top:324.7px;background:#ec8a2e"></div>
<div class="t " style="left:363.6px;top:323.3px;font-size:7px;line-height:8px;color:#5c5c5c;letter-spacing:0.20px;">アプリID</div>
<div class="t" style="left:407.8px;top:322.9px;width:22px;text-align:right;font-size:8px;line-height:9px;color:#5089d2">3</div>
<div class="dot" style="left:355.2px;top:335.8px;background:#8d44df"></div>
<div class="t " style="left:363.6px;top:334.4px;font-size:7px;line-height:8px;color:#5c5c5c;letter-spacing:-0.20px;">脅威</div>
<div class="t" style="left:407.8px;top:334.0px;width:22px;text-align:right;font-size:8px;line-height:9px;color:#5089d2">1</div>
<div class="dot" style="left:355.2px;top:346.9px;background:#dd2a30"></div>
<div class="t " style="left:363.6px;top:345.5px;font-size:7px;line-height:8px;color:#5c5c5c;letter-spacing:-0.37px;">オフィス未使用</div>
<div class="t" style="left:407.8px;top:345.1px;width:22px;text-align:right;font-size:8px;line-height:9px;color:#5089d2">2</div>
<div class="dot" style="left:355.2px;top:358.0px;background:#dd2a30"></div>
<div class="t " style="left:363.6px;top:356.6px;font-size:7px;line-height:8px;color:#5c5c5c;letter-spacing:-0.34px;">スペック不足</div>
<div class="t" style="left:407.8px;top:356.2px;width:22px;text-align:right;font-size:8px;line-height:9px;color:#5089d2">1</div>
<div class="dot" style="left:355.2px;top:369.1px;background:#dd2a30"></div>
<div class="t " style="left:363.6px;top:367.7px;font-size:7px;line-height:8px;color:#5c5c5c;letter-spacing:-0.34px;">個人容量圧迫</div>
<div class="t" style="left:407.8px;top:367.3px;width:22px;text-align:right;font-size:8px;line-height:9px;color:#5089d2">1</div>
<div class="hd " style="left:434px;top:223px;width:82px"></div>
<div class="t " style="left:457.5px;top:225px;font-size:8.8px;line-height:13px;color:#505050;letter-spacing:0.44px;">11/7</div>
<div class="t " style="left:477.5px;top:225px;font-size:8.8px;line-height:13px;color:#505050;letter-spacing:0.22px;">(水)</div>
<div class="vl" style="left:517px;top:240px;height:207px"></div>
<div class="dot" style="left:439.2px;top:247.0px;background:#56a866"></div>
<div class="t " style="left:447.6px;top:245.6px;font-size:7px;line-height:8px;color:#5c5c5c;letter-spacing:-0.20px;">資産</div>
<div class="t" style="left:491.8px;top:245.2px;width:22px;text-align:right;font-size:8px;line-height:9px;color:#5089d2">4</div>
<div class="dot" style="left:439.2px;top:258.1px;background:#56a866"></div>
<div class="t " style="left:447.6px;top:256.7px;font-size:7px;line-height:8px;color:#5c5c5c;letter-spacing:-0.10px;">アプリ禁止</div>
<div class="t" style="left:491.8px;top:256.3px;width:22px;text-align:right;font-size:8px;line-height:9px;color:#5089d2">3</div>
<div class="dot" style="left:439.2px;top:269.2px;background:#ec8a2e"></div>
<div class="t " style="left:447.6px;top:267.8px;font-size:7px;line-height:8px;color:#5c5c5c;letter-spacing:-0.20px;">操作</div>
<div class="t" style="left:491.8px;top:267.4px;width:22px;text-align:right;font-size:8px;line-height:9px;color:#5089d2">1</div>
<div class="dot" style="left:439.2px;top:280.3px;background:#3d7fdc"></div>
<div class="t " style="left:447.6px;top:278.9px;font-size:7px;line-height:8px;color:#5c5c5c;letter-spacing:-0.30px;">時間外</div>
<div class="t" style="left:491.8px;top:278.5px;width:22px;text-align:right;font-size:8px;line-height:9px;color:#5089d2">4</div>
<div class="dot" style="left:439.2px;top:291.4px;background:#ec8a2e"></div>
<div class="t " style="left:447.6px;top:290.0px;font-size:7px;line-height:8px;color:#5c5c5c;letter-spacing:-0.17px;">プリント</div>
<div class="t" style="left:491.8px;top:289.6px;width:22px;text-align:right;font-size:8px;line-height:9px;color:#5089d2">6</div>
<div class="dot" style="left:439.2px;top:302.5px;background:#ec8a2e"></div>
<div class="t " style="left:447.6px;top:301.1px;font-size:7px;line-height:8px;color:#5c5c5c;letter-spacing:0.41px;">Web</div>
<div class="t" style="left:491.8px;top:300.7px;width:22px;text-align:right;font-size:8px;line-height:9px;color:#5089d2">2</div>
<div class="dot" style="left:439.2px;top:313.6px;background:#8d44df"></div>
<div class="t " style="left:447.6px;top:312.2px;font-size:7px;line-height:8px;color:#5c5c5c;letter-spacing:-0.20px;">脅威</div>
<div class="t" style="left:491.8px;top:311.8px;width:22px;text-align:right;font-size:8px;line-height:9px;color:#5089d2">1</div>
<div class="dot" style="left:439.2px;top:324.7px;background:#dd2a30"></div>
<div class="t " style="left:447.6px;top:323.3px;font-size:7px;line-height:8px;color:#5c5c5c;letter-spacing:-0.37px;">オフィス未使用</div>
<div class="t" style="left:491.8px;top:322.9px;width:22px;text-align:right;font-size:8px;line-height:9px;color:#5089d2">3</div>
<div class="dot" style="left:439.2px;top:335.8px;background:#dd2a30"></div>
<div class="t " style="left:447.6px;top:334.4px;font-size:7px;line-height:8px;color:#5c5c5c;letter-spacing:-0.34px;">スペック不足</div>
<div class="t" style="left:491.8px;top:334.0px;width:22px;text-align:right;font-size:8px;line-height:9px;color:#5089d2">1</div>
<div class="abs" style="left:12px;top:447px;width:480px;height:1px;background:#e6e6e6"></div>
</div>
<div class="abs" style="left:688px;top:73px;width:11px;height:365px;background:#f1f1f1"></div>
<div class="abs" style="left:689px;top:85px;width:9px;height:235px;background:#c1c1c1"></div>
<svg class="abs" style="left:690px;top:76px" width="7" height="5" viewBox="0 0 7 5"><path d="M0.5 4.2 L3.5 0.8 L6.5 4.2Z" fill="#505050"/></svg>
<svg class="abs" style="left:690px;top:429px" width="7" height="5" viewBox="0 0 7 5"><path d="M0.5 0.8 L3.5 4.2 L6.5 0.8Z" fill="#505050"/></svg>
<div class="abs" style="left:205px;top:438px;width:483px;height:10px;background:#f1f1f1"></div>
<div class="abs" style="left:217px;top:439px;width:325px;height:9px;background:#c1c1c1"></div>
<svg class="abs" style="left:209px;top:440px" width="5" height="7" viewBox="0 0 5 7"><path d="M4.2 0.5 L0.8 3.5 L4.2 6.5Z" fill="#505050"/></svg>
<svg class="abs" style="left:679px;top:440px" width="5" height="7" viewBox="0 0 5 7"><path d="M0.8 0.5 L4.2 3.5 L0.8 6.5Z" fill="#505050"/></svg>
<div class="abs" style="left:688px;top:438px;width:11px;height:10px;background:#dcdcdc"></div>
</body></html>
